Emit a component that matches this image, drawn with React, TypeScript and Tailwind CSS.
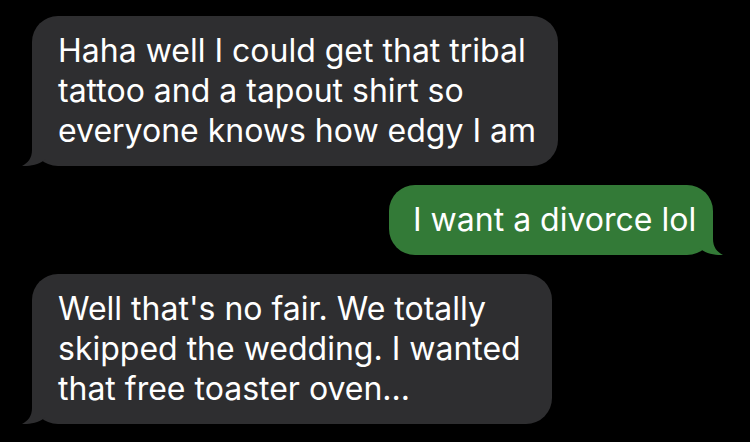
function Tail({ side, color }: { side: 'left' | 'right'; color: string }) {
  const pos = side === 'left' ? 'left-[-10px]' : 'right-[-10px] -scale-x-100'
  return (
    <svg
      className={`absolute bottom-0 ${pos}`}
      width="30"
      height="30"
      viewBox="0 0 30 30"
    >
      <path d="M10 0 L10 14 C10 22 6 27 0 30 C9 30.5 18 28 24 23 L24 0 Z" fill={color} />
    </svg>
  )
}

function Bubble({
  side,
  lines,
  width,
}: {
  side: 'left' | 'right'
  lines: string[]
  width: string
}) {
  const them = side === 'left'
  const color = them ? '#2e2e30' : '#337a37'
  return (
    <div
      className={`relative ${width} ${
        them ? 'self-start ml-[32px] bg-[#2e2e30] pl-[26px]' : 'self-end mr-[37px] bg-[#337a37] pl-[24px]'
      } rounded-[26px] py-[15px] text-white text-[32px] leading-[40px] whitespace-nowrap`}
    >
      <Tail side={side} color={color} />
      <span className="relative">
        {lines.map((l, i) => (
          <span key={i} className="block">
            {l}
          </span>
        ))}
      </span>
    </div>
  )
}

export default function App() {
  return (
    <div
      className="w-[750px] h-[442px] bg-black flex flex-col pt-4 overflow-hidden"
      style={{ fontFamily: 'Inter, "Noto Sans", sans-serif' }}
    >
      <Bubble
        side="left"
        width="w-[526px]"
        lines={['Haha well I could get that tribal', 'tattoo and a tapout shirt so', 'everyone knows how edgy I am']}
      />
      <div className="mt-[19px] flex flex-col">
        <Bubble side="right" width="w-[324px]" lines={['I want a divorce lol']} />
      </div>
      <div className="mt-[19px] flex flex-col">
        <Bubble
          side="left"
          width="w-[520px]"
          lines={["Well that's no fair. We totally", 'skipped the wedding. I wanted', 'that free toaster oven...']}
        />
      </div>
    </div>
  )
}
